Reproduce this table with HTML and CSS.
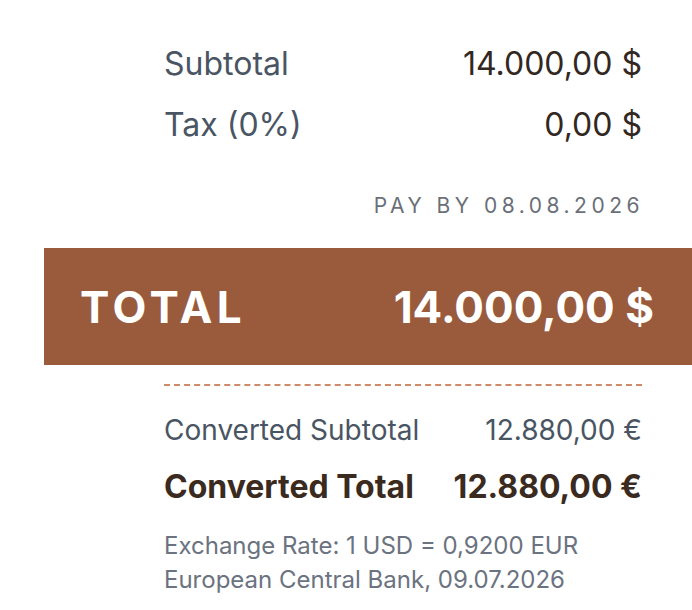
FILE: index.html
```html
<!DOCTYPE html>
<html lang="en">
<head>
  <meta charset="UTF-8">
  <title>Invoice summary</title>
  <link rel="stylesheet" href="styles.css">
</head>
<body>
<div class="summary">
  <div class="row">
    <span class="label">Subtotal</span>
    <span class="value">14.000,00 $</span>
  </div>
  <div class="row">
    <span class="label">Tax (0%)</span>
    <span class="value">0,00 $</span>
  </div>
  <div class="due">PAY BY 08.08.2026</div>

  <!-- total bar -->
  <div class="total">
    <span class="total-label">TOTAL</span>
    <span class="total-value">14.000,00 $</span>
  </div>

  <div class="converted">
    <div class="row conv">
      <span class="label">Converted Subtotal</span>
      <span class="value">12.880,00 €</span>
    </div>
    <div class="row conv strong">
      <span class="label">Converted Total</span>
      <span class="value">12.880,00 €</span>
    </div>
    <p class="rate">Exchange Rate: 1 USD = 0,9200 EUR<br>European Central Bank, 09.07.2026</p>
  </div>
</div>
</body>
</html>
```

FILE: styles.css
```css
body {
  margin: 0;
  background: #fff;
  font-family: Inter, "Noto Sans", sans-serif;
}

.summary {
  width: 478px;
  margin-left: 164px;
  padding-top: 42px;
}

.row {
  display: flex;
  justify-content: space-between;
  align-items: baseline;
  height: 61px;
  line-height: 44px;
  font-size: 32px;
}

.label {
  color: #4a5563;
}

.value {
  color: #33281f;
}

.due {
  margin-top: 30px;
  margin-right: -2px;
  text-align: right;
  font-size: 21px;
  letter-spacing: 4.5px;
  color: #6b6f78;
  line-height: 24px;
}

.total {
  display: flex;
  justify-content: space-between;
  align-items: center;
  margin: 30px -50px 0 -120px;
  padding: 0 38px 0 36px;
  height: 117px;
  background: #9a5b3d;
  color: #fff;
  font-weight: 700;
}

.total-label {
  font-size: 44px;
  letter-spacing: 4.5px;
}

.total-value {
  font-size: 44px;
}

.converted {
  margin-top: 19px;
  border-top: 2px dashed #cf8a68;
  padding-top: 24px;
}

.row.conv {
  font-size: 28px;
  height: 57px;
  line-height: 40px;
}

.row.conv .value {
  color: #4a5563;
}

.row.strong {
  font-weight: 700;
  font-size: 32px;
}

.row.strong .label,
.row.strong .value {
  color: #3a2a20;
}

.rate {
  margin: 5px 0 0;
  font-size: 24px;
  line-height: 34px;
  color: #6b7280;
}
```
